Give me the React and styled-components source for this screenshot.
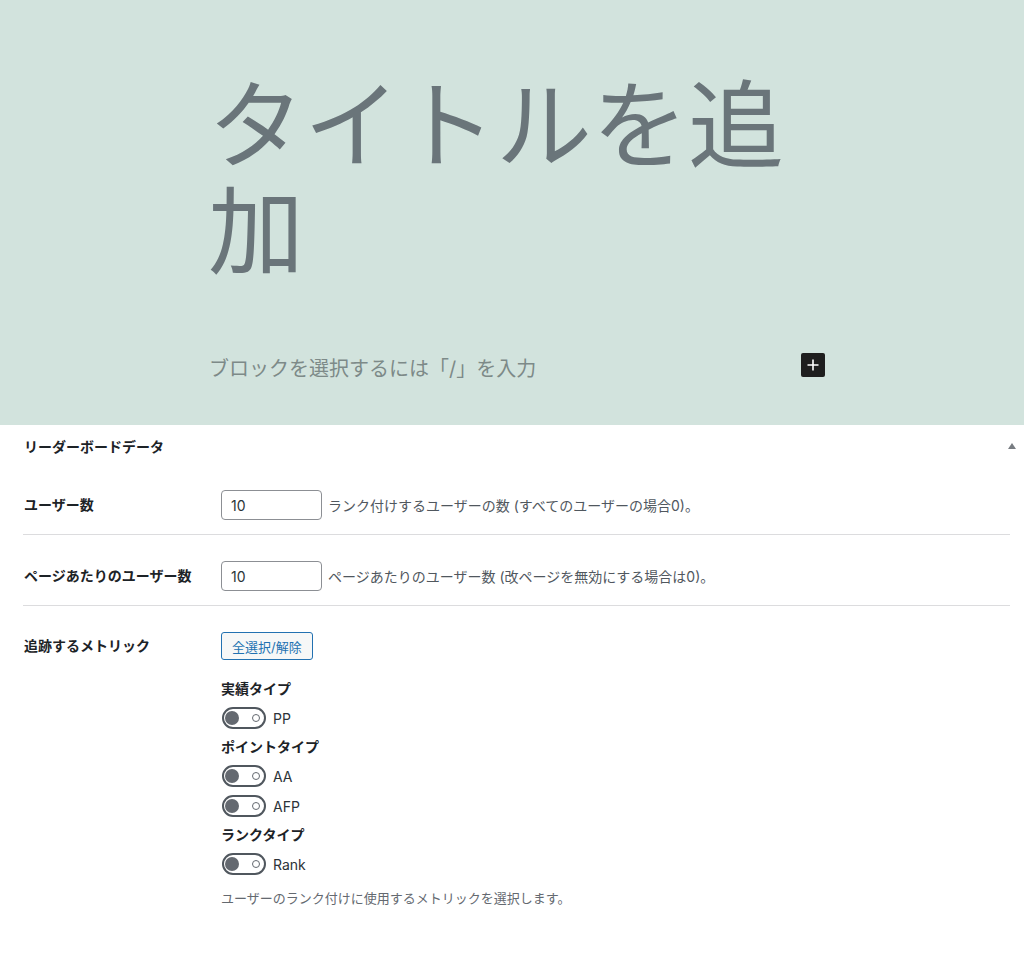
import React from 'react';
import styled, { createGlobalStyle } from 'styled-components';

const GlobalStyle = createGlobalStyle`
  * {
    box-sizing: border-box;
  }
  body {
    margin: 0;
    background: #ffffff;
    font-family: 'Inter', 'Noto Sans CJK JP', sans-serif;
    color: #1d2327;
  }
`;

const metricGroups = [
  { title: '実績タイプ', items: ['PP'] },
  { title: 'ポイントタイプ', items: ['AA', 'AFP'] },
  { title: 'ランクタイプ', items: ['Rank'] },
];

function Toggle({ label }) {
  return (
    <ToggleRow>
      <ToggleTrack>
        <ToggleKnob />
        <ToggleRing />
      </ToggleTrack>
      <ToggleLabel>{label}</ToggleLabel>
    </ToggleRow>
  );
}

function App() {
  return (
    <Page>
      <GlobalStyle />

      <EditorHeader>
        <Column>
          <PostTitle>タイトルを追加</PostTitle>
          <BlockRow>
            <Placeholder>ブロックを選択するには「/」を入力</Placeholder>
            <AddButton>
              <svg width="12" height="12" viewBox="0 0 12 12">
                <path d="M6 0.5v11M0.5 6h11" stroke="#fff" strokeWidth="1.6" />
              </svg>
            </AddButton>
          </BlockRow>
        </Column>
      </EditorHeader>

      <MetaBox>
        <MetaBoxHeader>
          <MetaBoxTitle>リーダーボードデータ</MetaBoxTitle>
          <svg width="8" height="6" viewBox="0 0 8 6">
            <path d="M4 0L8 6H0z" fill="#787c82" />
          </svg>
        </MetaBoxHeader>

        <FormRow>
          <FieldLabel $h={30}>ユーザー数</FieldLabel>
          <FieldBody>
            <Inline>
              <NumberInput defaultValue="10" />
              <Description>ランク付けするユーザーの数 (すべてのユーザーの場合0)。</Description>
            </Inline>
          </FieldBody>
        </FormRow>

        <FormRow>
          <FieldLabel $h={30}>ページあたりのユーザー数</FieldLabel>
          <FieldBody>
            <Inline>
              <NumberInput defaultValue="10" />
              <Description>ページあたりのユーザー数 (改ページを無効にする場合は0)。</Description>
            </Inline>
          </FieldBody>
        </FormRow>

        <FormRow $last>
          <FieldLabel $h={28}>追跡するメトリック</FieldLabel>
          <FieldBody>
            <SecondaryButton>全選択/解除</SecondaryButton>
            <MetricList>
              {metricGroups.map((group) => (
                <React.Fragment key={group.title}>
                  <GroupTitle>{group.title}</GroupTitle>
                  {group.items.map((item) => (
                    <Toggle key={item} label={item} />
                  ))}
                </React.Fragment>
              ))}
            </MetricList>
            <HelpText>ユーザーのランク付けに使用するメトリックを選択します。</HelpText>
          </FieldBody>
        </FormRow>
      </MetaBox>
    </Page>
  );
}

const Page = styled.div`
  width: 1024px;
  min-height: 955px;
  background: #ffffff;
`;

const EditorHeader = styled.div`
  background-color: #d2e3dd;
  height: 425px;
  padding-top: 72px;
`;

const Column = styled.div`
  width: 618px;
  margin-left: 208px;
`;

const PostTitle = styled.h1`
  margin: 0;
  font-size: 96px;
  line-height: 106px;
  font-weight: 400;
  color: #6a757a;
  letter-spacing: 0;
`;

const BlockRow = styled.div`
  display: flex;
  align-items: center;
  justify-content: space-between;
  margin-top: 67px;
  height: 28px;
`;

const Placeholder = styled.div`
  font-size: 20px;
  color: #7d8a88;
  margin-left: 1px;
  margin-top: 4px;
`;

const AddButton = styled.div`
  width: 24px;
  height: 24px;
  margin-right: 1px;
  border-radius: 2px;
  background: #1e1e1e;
  display: flex;
  align-items: center;
  justify-content: center;
`;

const MetaBox = styled.div`
  padding: 0 8px 0 23px;
`;

const MetaBoxHeader = styled.div`
  height: 40px;
  display: flex;
  align-items: center;
  justify-content: space-between;
  padding-top: 2px;
  padding-left: 1px;
`;

const MetaBoxTitle = styled.h2`
  margin: 0;
  font-size: 14px;
  font-weight: 600;
  color: #1d2327;
`;

const FormRow = styled.div`
  display: flex;
  align-items: flex-start;
  padding: 25px 0 14px;
  margin-right: 6px;
  border-bottom: ${(p) => (p.$last ? 'none' : '1px solid #dcdcde')};

  & + & {
    padding-top: 26px;
  }
`;

const FieldLabel = styled.div`
  width: 198px;
  flex-shrink: 0;
  padding-left: 1px;
  font-size: 14px;
  font-weight: 600;
  line-height: ${(p) => p.$h}px;
  color: #1d2327;
`;

const FieldBody = styled.div`
  display: flex;
  flex-direction: column;
  align-items: flex-start;
`;

const Inline = styled.div`
  display: flex;
  align-items: center;
`;

const NumberInput = styled.input`
  width: 101px;
  height: 30px;
  border: 1px solid #8c8f94;
  border-radius: 4px;
  padding: 0 9px;
  font-family: 'Inter', 'Noto Sans CJK JP', sans-serif;
  font-size: 14px;
  color: #2c3338;
  background: #fff;
  outline: none;
`;

const Description = styled.span`
  margin-left: 6px;
  font-size: 14px;
  color: #50575e;
`;

const SecondaryButton = styled.button`
  height: 28px;
  padding: 0 10px;
  border: 1px solid #2271b1;
  border-radius: 3px;
  background: #f6f7f7;
  color: #2271b1;
  font-family: 'Inter', 'Noto Sans CJK JP', sans-serif;
  font-size: 13px;
  cursor: pointer;
`;

const MetricList = styled.div`
  display: flex;
  flex-direction: column;
  gap: 8px;
  margin-top: 19px;
`;

const GroupTitle = styled.div`
  font-size: 14px;
  font-weight: 600;
  line-height: 20px;
  color: #1d2327;
`;

const ToggleRow = styled.div`
  display: flex;
  align-items: center;
  height: 22px;
  padding-left: 1px;
`;

const ToggleTrack = styled.span`
  position: relative;
  width: 44px;
  height: 22px;
  border: 2px solid #50575e;
  border-radius: 11px;
  background: #fff;
`;

const ToggleKnob = styled.span`
  position: absolute;
  left: 1px;
  top: 2px;
  width: 14px;
  height: 14px;
  border-radius: 50%;
  background: #646970;
`;

const ToggleRing = styled.span`
  position: absolute;
  right: 4px;
  top: 5px;
  width: 8px;
  height: 8px;
  border-radius: 50%;
  border: 1.5px solid #646970;
`;

const ToggleLabel = styled.span`
  margin-left: 7px;
  font-size: 14px;
  color: #2c3338;
`;

const HelpText = styled.p`
  margin: 13px 0 0;
  font-size: 13px;
  line-height: 20px;
  color: #646970;
`;

export default App;
